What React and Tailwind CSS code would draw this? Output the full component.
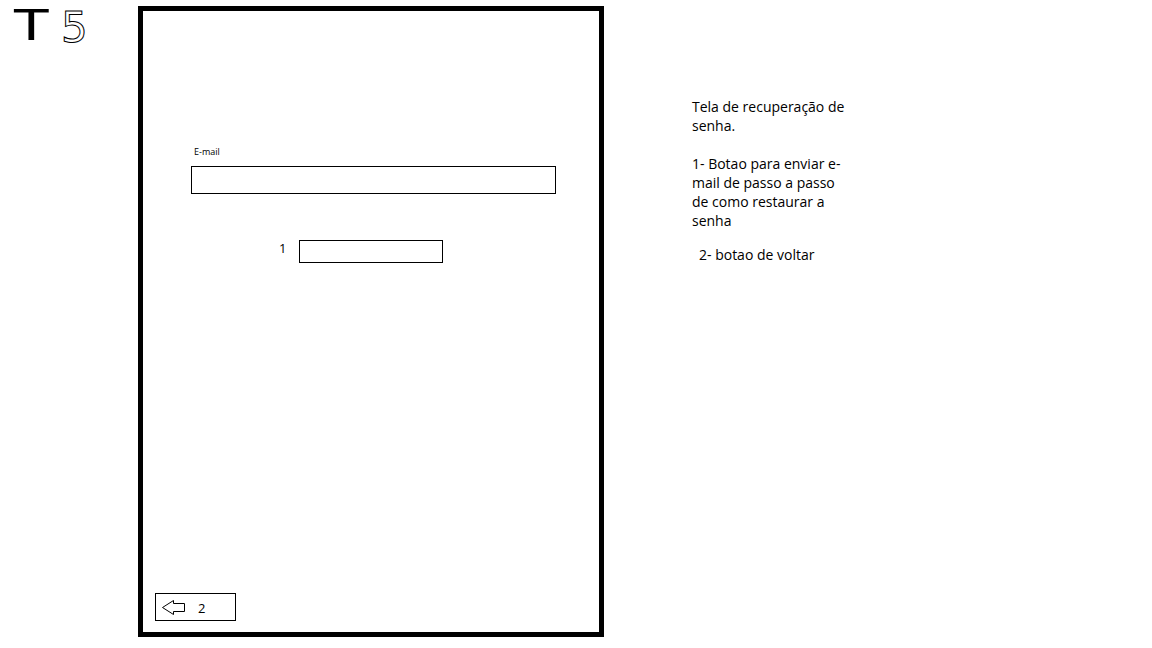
const font = { fontFamily: '"Open Sans", "Noto Sans", sans-serif' };

const BackArrow = () => (
    <svg width="24" height="15" viewBox="0 0 24 15" className="block">
        <polygon
            points="0.5,7.5 11.5,0.5 11.5,3.5 22.5,3.5 22.5,11.5 11.5,11.5 11.5,14.5"
            fill="white"
            stroke="black"
            strokeWidth="1"
        />
    </svg>
);

const App = () => {
    return (
        <div className="w-[1152px] h-[648px] bg-white flex items-start text-black font-['Open_Sans','Noto_Sans',sans-serif]">
            {/* sketch label */}
            <div className="w-[138px] shrink-0 flex items-start pl-[18px] pt-[2px] leading-none">
                <span className="inline-block text-[44px] font-normal font-['Liberation_Sans',sans-serif] leading-[46px] scale-x-[1.4]">T</span>
                <span className="ml-[16px] mt-[2px] text-[42px] font-['DejaVu_Sans',sans-serif] leading-[48px] text-transparent [-webkit-text-stroke:1px_black]">5</span>
            </div>

            {/* phone frame */}
            <div className="mt-[6px] w-[466px] h-[631px] shrink-0 border-[5px] border-black flex flex-col">
                <div className="pt-[135px] pl-[51px] text-[9px] leading-[12px]">E-mail</div>
                <div className="mt-[8px] ml-[48px] w-[365px] h-[28px] border border-black"></div>

                <div className="mt-[46px] ml-[136px] flex items-start">
                    <span className="w-[20px] text-[13px] leading-[16px]">1</span>
                    <div className="w-[144px] h-[23px] border border-black"></div>
                </div>

                <div className="mt-auto mb-[11px] ml-[12px] w-[81px] h-[28px] border border-black flex items-center pl-[6px]">
                    <BackArrow />
                    <span className="ml-[12px] text-[13px] leading-[16px] pt-[2px]">2</span>
                </div>
            </div>

            {/* notes */}
            <div className="ml-[88px] mt-[97px] text-[14px] leading-[19px] whitespace-nowrap" style={font}>
                <div>Tela de recuperação de</div>
                <div>senha.</div>
                <div className="h-[19px]"></div>
                <div>1- Botao para enviar e-</div>
                <div>mail de passo a passo</div>
                <div>de como restaurar a</div>
                <div>senha</div>
                <div className="mt-[15px] pl-[7px]">2- botao de voltar</div>
            </div>
        </div>
    );
};

export default App;
